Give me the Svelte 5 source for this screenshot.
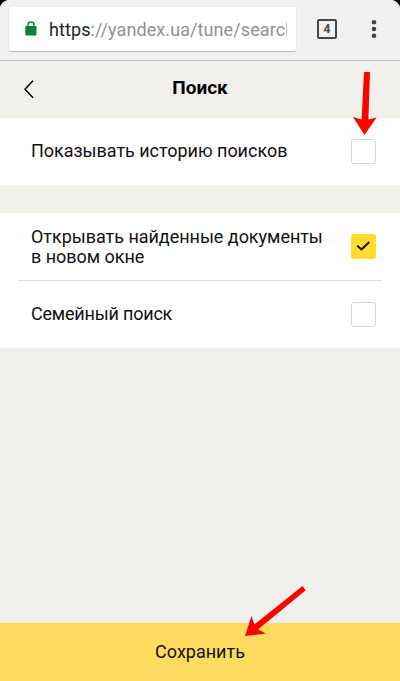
<script>
  let history = $state(false);
  let newWindow = $state(true);
  let family = $state(false);
</script>

{#snippet box(checked, toggle, label)}
  <button class="box" class:checked role="checkbox" aria-checked={checked} aria-label={label} onclick={toggle}>
    {#if checked}
      <svg width="25" height="25" viewBox="0 0 25 25"><path d="M6.3 11.7 10.5 15.5 18.3 8" fill="none" stroke="#111" stroke-width="2" /></svg>
    {/if}
  </button>
{/snippet}

<div class="screen">
  <div class="browser">
    <div class="address">
      <svg class="lock" width="12" height="15" viewBox="0 0 12 15">
        <path d="M3 6V4a3 3 0 0 1 6 0v2" fill="none" stroke="#0b8043" stroke-width="1.5" />
        <rect x="0.3" y="5" width="11.2" height="9.6" rx="1.3" fill="#0b8043" />
      </svg>
      <span class="url"><b>https</b>://yandex.ua/tune/search</span>
    </div>
    <div class="tabs">4</div>
    <svg class="dots" width="6" height="20" viewBox="0 0 6 20" fill="#454545">
      <circle cx="3" cy="3.3" r="2.3" /><circle cx="3" cy="10" r="2.3" /><circle cx="3" cy="16.7" r="2.3" />
    </svg>
  </div>

  <header>
    <svg class="back" width="12" height="20" viewBox="0 0 12 20"><path d="M10 1.7 2 10.2 10 18.7" fill="none" stroke="#000" stroke-width="1.5" /></svg>
    <h1>Поиск</h1>
  </header>

  <section class="first">
    <div class="row">
      <span>Показывать историю поисков</span>
      {@render box(history, () => (history = !history), 'Показывать историю поисков')}
    </div>
  </section>

  <section class="second">
    <div class="row tall">
      <span>Открывать найденные документы<br />в новом окне</span>
      {@render box(newWindow, () => (newWindow = !newWindow), 'Открывать найденные документы в новом окне')}
    </div>
    <div class="row low">
      <span>Семейный поиск</span>
      {@render box(family, () => (family = !family), 'Семейный поиск')}
    </div>
  </section>

  <button class="save">Сохранить</button>

  <svg class="arrows" width="400" height="681" viewBox="0 0 400 681" fill="#f00">
    <path d="M364 72h6l-1.6 47.5 8.2-2L364.5 135 353 117l8.6 2.5z" />
    <path d="M302.5 586 305.7 590.3 258 629.5 266 633.5 245 636 251.5 616 254.3 624.5z" />
  </svg>
</div>

<style>
  :global(body) { margin: 0; background: #000; }
  .screen {
    position: relative;
    display: flex;
    flex-direction: column;
    height: 681px;
    overflow: hidden;
    border-radius: 9px 9px 0 0;
    background: #f1f0ec;
    font-family: Roboto, sans-serif;
    font-size: 18px;
    color: #111;
  }
  .browser {
    box-sizing: border-box;
    height: 61px;
    flex: none;
    display: flex;
    align-items: flex-start;
    background: #f1f1f1;
    border-bottom: 1px solid #c5c5c4;
  }
  .address {
    box-sizing: border-box;
    width: 287px;
    height: 44px;
    margin: 7px 0 0 9px;
    padding: 0 8px 0 16px;
    display: flex;
    align-items: center;
    background: #fff;
    border-radius: 2px;
    box-shadow: 0 1px 1px #bbb, 0 0 1px #ccc;
  }
  .lock { flex: none; margin: 0 12px 1px 0; }
  .url {
    width: 238px;
    overflow: hidden;
    white-space: nowrap;
    color: #919191;
    letter-spacing: 0.09px;
  }
  .url b { font-weight: 400; color: #222; }
  .tabs {
    box-sizing: border-box;
    width: 20px;
    height: 20px;
    margin: 19px 0 0 21px;
    border: 2px solid #454545;
    border-radius: 2px;
    font-size: 12px;
    font-weight: 700;
    line-height: 16px;
    text-align: center;
    color: #454545;
  }
  .dots { margin: 19px 0 0 34px; }
  header {
    box-sizing: border-box;
    height: 57px;
    padding-bottom: 2px;
    flex: none;
    display: grid;
    grid-template-columns: 60px 1fr 60px;
    align-items: center;
  }
  .back { margin-left: 23px; }
  h1 {
    margin: 0;
    padding-bottom: 2px;
    font-size: 19px;
    font-weight: 700;
    text-align: center;
    color: #000;
    line-height: 22px;
  }
  section { background: #fff; flex: none; }
  .second { margin-top: 28px; }
  .row {
    box-sizing: border-box;
    display: flex;
    justify-content: space-between;
    align-items: center;
    height: 67px;
    margin: 0 18px;
    padding: 0 6px 0 13px;
    line-height: 20px;
    letter-spacing: -0.03px;
  }
  .row span { padding-bottom: 2px; }
  .tall span { padding-bottom: 0; }
  .tall { height: 68px; border-bottom: 1px solid #dcdcdc; }
  .low { letter-spacing: -0.2px; }
  .box {
    box-sizing: border-box;
    width: 25px;
    height: 25px;
    padding: 0;
    flex: none;
    border: 1px solid #d6d6d6;
    border-radius: 3px;
    background: #fff;
  }
  .box.checked { border: 0; background: #ffdc2d; }
  .box svg { display: block; }
  .save {
    height: 58px;
    margin-top: auto;
    padding: 0 0 2px;
    border: 0;
    background: #ffdb60;
    font: 18px Roboto, sans-serif;
    color: #111;
  }
  .arrows { position: absolute; inset: 0; pointer-events: none; }
</style>
